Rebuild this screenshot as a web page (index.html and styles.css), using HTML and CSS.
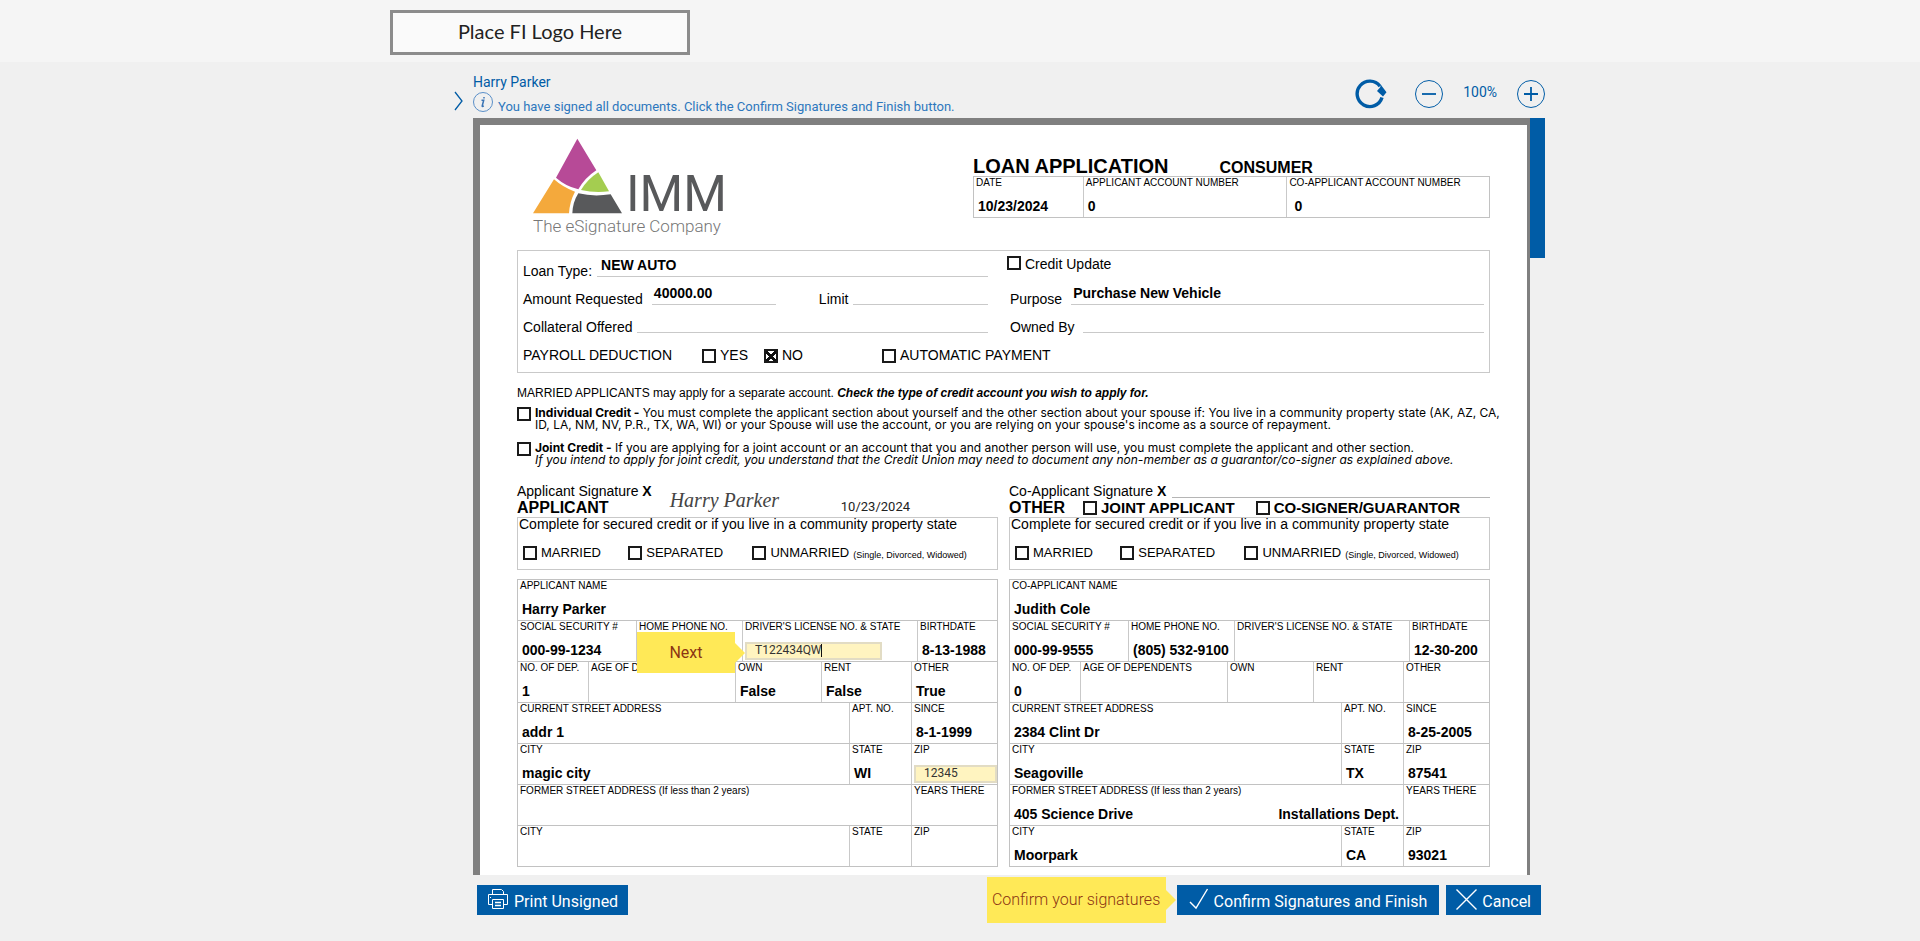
FILE: index.html
```html
<!DOCTYPE html>
<html lang="en">
<head>
<meta charset="utf-8">
<title>Loan Application</title>
<link rel="stylesheet" href="styles.css">
</head>
<body>
<header class="site-header">
  <div class="container"><div class="fi-logo">Place FI Logo Here</div></div>
</header>

<main class="container">
  <div class="workspace">
    <div class="toolbar">
      <button class="icon-btn chevron" type="button" aria-label="Expand panel">
        <svg width="9" height="20" viewBox="0 0 9 20"><path d="M1 1l7 9-7 9" fill="none" stroke="#005ca6" stroke-width="1.3"/></svg>
      </button>
      <div class="status">
        <div class="signer">Harry Parker</div>
        <div class="notice">
          <svg width="20" height="20" viewBox="0 0 20 20"><circle cx="10" cy="10" r="9.500" fill="none" stroke="#5a8fc8"/><path d="M8.500 8.200h2.200l-1.500 5.800q-.2.900 1.600-.2M11 5v1.500" fill="none" stroke="#3a74b5" stroke-width="1.500"/></svg>
          <span>You have signed all documents. Click the Confirm Signatures and Finish button.</span>
        </div>
      </div>
      <div class="zoom">
        <button class="icon-btn" type="button" aria-label="Refresh">
          <svg width="32" height="30" viewBox="0 0 32 30"><path d="M25 7.200A12.700 12.700 0 1 0 27 18.500" fill="none" stroke="#005ca6" stroke-width="3.400"/><path d="M22 12l3-3.500 1-2.500 5.500 7.300-3.500 4.200z" fill="#005ca6"/></svg>
        </button>
        <button class="icon-btn minus" type="button" aria-label="Zoom out">
          <svg width="28" height="28" viewBox="0 0 28 28"><circle cx="14" cy="14" r="13.500" fill="none" stroke="#005ca6"/><path d="M7 14h14" stroke="#005ca6" stroke-width="1.800"/></svg>
        </button>
        <span class="percent">100%</span>
        <button class="icon-btn" type="button" aria-label="Zoom in">
          <svg width="28" height="28" viewBox="0 0 28 28"><circle cx="14" cy="14" r="13.500" fill="none" stroke="#005ca6"/><path d="M7 14h14M14 7v14" stroke="#005ca6" stroke-width="1.800"/></svg>
        </button>
      </div>
    </div>

    <div class="viewer">
      <article class="sheet">
        <div class="sheet-head">
          <div class="brand">
            <svg width="89" height="77" viewBox="39 21 267 231" aria-hidden="true">
              <path d="M172 26L229 121Q196 142 175 178Q136 168 108 143Z" fill="#b74a97"/>
              <path d="M102 148Q130 173 165 185Q149 215 147 250H39Z" fill="#f4a93c"/>
              <path d="M235 127L267 184Q225 190 183 180Q202 148 235 127Z" fill="#a4cd50"/>
              <path d="M175 190Q220 201 272 193L306 250H157Q158 217 175 190Z" fill="#58595b"/>
            </svg>
            <span class="brand-name">IMM</span>
            <span class="brand-tag">The eSignature Company</span>
          </div>
          <div>
            <div class="titles"><h1>LOAN APPLICATION</h1><h2>CONSUMER</h2></div>
            <div class="form-table">
              <div class="row r-head">
                <div class="cell"><span class="cap">DATE</span><span class="val">10/23/2024</span></div>
                <div class="cell"><span class="cap">APPLICANT ACCOUNT NUMBER</span><span class="val">0</span></div>
                <div class="cell"><span class="cap">CO-APPLICANT ACCOUNT NUMBER</span><span class="val inset">0</span></div>
              </div>
            </div>
          </div>
        </div>

        <section class="request">
          <div class="pair">
            <div class="line"><span>Loan Type:</span><b class="fill">NEW AUTO</b></div>
            <label class="credit"><input type="checkbox">Credit Update</label>
          </div>
          <div class="pair">
            <div class="line"><span>Amount Requested</span><b class="fill amount">40000.00</b><span class="limit">Limit</span><b class="fill"></b></div>
            <div class="line"><span>Purpose</span><b class="fill purpose">Purchase New Vehicle</b></div>
          </div>
          <div class="pair">
            <div class="line"><span>Collateral Offered</span><b class="fill"></b></div>
            <div class="line"><span>Owned By</span><b class="fill owner"></b></div>
          </div>
          <div class="payroll">
            <span>PAYROLL DEDUCTION</span>
            <label><input type="checkbox">YES</label>
            <label><input type="checkbox" checked>NO</label>
            <label><input type="checkbox">AUTOMATIC PAYMENT</label>
          </div>
        </section>

        <section class="terms">
          <p>MARRIED APPLICANTS may apply for a separate account. <b><i>Check the type of credit account you wish to apply for.</i></b></p>
          <label><input type="checkbox"><span><b>Individual Credit -</b> You must complete the applicant section about yourself and the other section about your spouse if: You live in a community property state (AK, AZ, CA,<br>ID, LA, NM, NV, P.R., TX, WA, WI) or your Spouse will use the account, or you are relying on your spouse's income as a source of repayment.</span></label>
          <label><input type="checkbox"><span><b>Joint Credit -</b> If you are applying for a joint account or an account that you and another person will use, you must complete the applicant and other section.<br><i>If you intend to apply for joint credit, you understand that the Credit Union may need to document any non-member as a guarantor/co-signer as explained above.</i></span></label>
        </section>

        <div class="parties">
          <section>
            <div class="signing">
              <div>
                <div class="sign-line"><span>Applicant Signature <b>X</b></span></div>
                <div class="role"><h3>APPLICANT</h3></div>
              </div>
              <span class="signature">Harry Parker</span>
              <span class="sign-date">10/23/2024</span>
            </div>
            <div class="marital">
              <p>Complete for secured credit or if you live in a community property state</p>
              <div class="choices">
                <label><input type="checkbox">MARRIED</label>
                <label><input type="checkbox">SEPARATED</label>
                <label><input type="checkbox">UNMARRIED <small>(Single, Divorced, Widowed)</small></label>
              </div>
            </div>
            <div class="form-table">
              <div class="row"><div class="cell"><span class="cap">APPLICANT NAME</span><span class="val">Harry Parker</span></div></div>
              <div class="row r-id">
                <div class="cell"><span class="cap">SOCIAL SECURITY #</span><span class="val">000-99-1234</span></div>
                <div class="cell"><span class="cap">HOME PHONE NO.</span><button class="flag next" type="button">Next</button></div>
                <div class="cell"><label class="cap" for="license">DRIVER'S LICENSE NO. &amp; STATE</label><span class="entry caret"><input id="license" type="text" value="T122434QW"></span></div>
                <div class="cell"><span class="cap">BIRTHDATE</span><span class="val">8-13-1988</span></div>
              </div>
              <div class="row r-home">
                <div class="cell"><span class="cap">NO. OF DEP.</span><span class="val">1</span></div>
                <div class="cell"><span class="cap">AGE OF DEPENDENTS</span></div>
                <div class="cell"><span class="cap">OWN</span><span class="val">False</span></div>
                <div class="cell"><span class="cap">RENT</span><span class="val">False</span></div>
                <div class="cell"><span class="cap">OTHER</span><span class="val">True</span></div>
              </div>
              <div class="row r-street">
                <div class="cell"><span class="cap">CURRENT STREET ADDRESS</span><span class="val">addr 1</span></div>
                <div class="cell"><span class="cap">APT. NO.</span></div>
                <div class="cell"><span class="cap">SINCE</span><span class="val">8-1-1999</span></div>
              </div>
              <div class="row r-street">
                <div class="cell"><span class="cap">CITY</span><span class="val">magic city</span></div>
                <div class="cell"><span class="cap">STATE</span><span class="val">WI</span></div>
                <div class="cell"><label class="cap" for="zip">ZIP</label><span class="entry wide"><input id="zip" type="text" value="12345"></span></div>
              </div>
              <div class="row r-former">
                <div class="cell"><span class="cap">FORMER STREET ADDRESS (If less than 2 years)</span></div>
                <div class="cell"><span class="cap">YEARS THERE</span></div>
              </div>
              <div class="row r-street">
                <div class="cell"><span class="cap">CITY</span></div>
                <div class="cell"><span class="cap">STATE</span></div>
                <div class="cell"><span class="cap">ZIP</span></div>
              </div>
            </div>
          </section>

          <section>
            <div class="signing">
              <div class="grow">
                <div class="sign-line"><span>Co-Applicant Signature <b>X</b></span><i class="rule"></i></div>
                <div class="role">
                  <h3>OTHER</h3>
                  <label><input type="checkbox">JOINT APPLICANT</label>
                  <label><input type="checkbox">CO-SIGNER/GUARANTOR</label>
                </div>
              </div>
            </div>
            <div class="marital">
              <p>Complete for secured credit or if you live in a community property state</p>
              <div class="choices">
                <label><input type="checkbox">MARRIED</label>
                <label><input type="checkbox">SEPARATED</label>
                <label><input type="checkbox">UNMARRIED <small>(Single, Divorced, Widowed)</small></label>
              </div>
            </div>
            <div class="form-table">
              <div class="row"><div class="cell"><span class="cap">CO-APPLICANT NAME</span><span class="val">Judith Cole</span></div></div>
              <div class="row r-id">
                <div class="cell"><span class="cap">SOCIAL SECURITY #</span><span class="val">000-99-9555</span></div>
                <div class="cell"><span class="cap">HOME PHONE NO.</span><span class="val">(805) 532-9100</span></div>
                <div class="cell"><span class="cap">DRIVER'S LICENSE NO. &amp; STATE</span></div>
                <div class="cell"><span class="cap">BIRTHDATE</span><span class="val">12-30-200</span></div>
              </div>
              <div class="row r-home">
                <div class="cell"><span class="cap">NO. OF DEP.</span><span class="val">0</span></div>
                <div class="cell"><span class="cap">AGE OF DEPENDENTS</span></div>
                <div class="cell"><span class="cap">OWN</span></div>
                <div class="cell"><span class="cap">RENT</span></div>
                <div class="cell"><span class="cap">OTHER</span></div>
              </div>
              <div class="row r-street">
                <div class="cell"><span class="cap">CURRENT STREET ADDRESS</span><span class="val">2384 Clint Dr</span></div>
                <div class="cell"><span class="cap">APT. NO.</span></div>
                <div class="cell"><span class="cap">SINCE</span><span class="val">8-25-2005</span></div>
              </div>
              <div class="row r-street">
                <div class="cell"><span class="cap">CITY</span><span class="val">Seagoville</span></div>
                <div class="cell"><span class="cap">STATE</span><span class="val">TX</span></div>
                <div class="cell"><span class="cap">ZIP</span><span class="val">87541</span></div>
              </div>
              <div class="row r-former">
                <div class="cell"><span class="cap">FORMER STREET ADDRESS (If less than 2 years)</span><span class="val split"><span>405 Science Drive</span><span>Installations Dept.</span></span></div>
                <div class="cell"><span class="cap">YEARS THERE</span></div>
              </div>
              <div class="row r-street">
                <div class="cell"><span class="cap">CITY</span><span class="val">Moorpark</span></div>
                <div class="cell"><span class="cap">STATE</span><span class="val">CA</span></div>
                <div class="cell"><span class="cap">ZIP</span><span class="val">93021</span></div>
              </div>
            </div>
          </section>
        </div>
      </article>
      <div class="scroll-track"><div class="scroll-thumb"></div></div>
    </div>

    <footer class="actions">
      <button class="action" type="button">
        <svg width="22" height="22" viewBox="0 0 22 22" fill="none" stroke="#fff"><path d="M5.500 6.500v-5h9l2 2v3M5.500 16.500h-4v-10h19v10h-4M3 9.500h1"/><path d="M5.500 11.500h11v9h-11z"/><path d="M8 14.500h6M8 17.500h6" stroke-width="1.500"/></svg>
        Print Unsigned
      </button>
      <span class="flag confirm-flag">Confirm your signatures</span>
      <button class="action confirm" type="button">
        <svg width="20" height="22" viewBox="0 0 20 22" fill="none" stroke="#fff" stroke-width="1.400"><path d="M1 14l6 6L18.500 1"/></svg>
        Confirm Signatures and Finish
      </button>
      <button class="action cancel" type="button">
        <svg width="21" height="21" viewBox="0 0 21 21" fill="none" stroke="#fff" stroke-width="1.400"><path d="M.5.500l20 20M20.500.500l-20 20"/></svg>
        Cancel
      </button>
    </footer>
  </div>
</main>
</body>
</html>
```

FILE: styles.css
```css
* { box-sizing: border-box; }
body { margin: 0; background: #f0f0f0; font-family: Roboto, sans-serif; }
h1, h2, h3, p { margin: 0; }
button, input { font: inherit; margin: 0; }

.container { max-width: 1140px; margin: 0 auto; }

.site-header { background: #f5f5f5; padding: 10px 0 7px; }
.fi-logo {
  width: 300px;
  border: 3px solid #8c8c8c;
  background: #fafafa;
  color: #222;
  font: 20px/37px Lato, sans-serif;
  padding-bottom: 2px;
  text-align: center;
}

.workspace { margin: 0 -15px 0 64px; }

/* Toolbar */
.toolbar { display: flex; align-items: flex-start; height: 56px; padding-top: 12px; color: #005ca6; }
.icon-btn { border: 0; padding: 0; background: none; cursor: pointer; }
.icon-btn svg, .notice svg, .action svg { display: block; }
.chevron { margin: 17px 10px 0 0; }
.signer { font-size: 14px; line-height: 16px; margin-bottom: 2px; }
.notice { display: flex; gap: 5px; font-size: 13px; line-height: 30px; height: 26px; color: #2d77bd; }
.zoom { display: flex; align-items: center; margin: 5px 0 0 auto; }
.zoom .minus { margin-left: 28px; }
.percent { font-size: 14px; line-height: 16px; margin: 0 20px; padding-bottom: 4px; }

/* Document viewer */
.viewer { display: flex; margin-left: 19px; }
.sheet {
  flex: 1;
  min-width: 0;
  padding: 0 37px 8px;
  border: solid #808080;
  border-width: 7px 3px 0 7px;
  background: #fff;
  color: #000;
  font-family: "Liberation Sans", Arial, sans-serif;
  font-size: 14px;
  line-height: 16px;
}
.scroll-track { width: 15px; }
.scroll-thumb { height: 140px; background: #005ca6; }

input[type="checkbox"] {
  appearance: none;
  flex: none;
  width: 14px;
  height: 14px;
  border: 2px solid #1a1a1a;
  background: #fff;
}
input[type="checkbox"]:checked {
  background:
    linear-gradient(45deg, transparent 40%, #111 40% 60%, transparent 60%),
    linear-gradient(-45deg, transparent 40%, #111 40% 60%, transparent 60%),
    #fff;
}
.sheet label { display: flex; gap: 4px; }

.sheet-head { display: grid; grid-template-columns: 456fr 517fr; height: 125px; }
.brand {
  display: grid;
  grid-template-columns: 89px auto;
  grid-template-rows: 77px 24px;
  column-gap: 4px;
  justify-content: start;
  align-items: end;
  padding: 12px 0 0 16px;
}
.brand-name { font: 50px/50px Roboto, sans-serif; height: 44px; color: #58595b; margin-bottom: 1px; }
.brand-tag { grid-column: 1 / -1; font: 300 17px/24px Roboto, sans-serif; color: #777; white-space: nowrap; }
.titles { display: flex; align-items: baseline; gap: 51px; height: 51px; padding-top: 30px; }
h1 { font-size: 20px; line-height: 23px; }
h2 { font-size: 16px; line-height: 20px; }
h3 { font-size: 16px; line-height: 18px; }

/* Bordered grids of captioned cells */
.form-table { border: solid #c2c2c2; border-width: 0 1px 1px; }
.row { display: grid; border-top: 1px solid #c2c2c2; height: 41px; }
.r-head { grid-template-columns: 109fr 204fr 203fr; }
.r-id { grid-template-columns: 118fr 106fr 175fr 80fr; }
.r-home { grid-template-columns: 70fr 147fr 86fr 90fr 86fr; }
.r-street { grid-template-columns: 331fr 62fr 86fr; }
.r-former { grid-template-columns: 393fr 86fr; }
.cell {
  position: relative;
  display: flex;
  flex-direction: column;
  gap: 10px;
  min-width: 0;
  padding-left: 2px;
  white-space: nowrap;
}
.cell + .cell { border-left: 1px solid #c9c9c9; }
.cap { font-size: 10px; line-height: 11px; }
.val { font-weight: bold; padding-left: 2px; }
.inset { padding-left: 5px; }
.split { display: flex; justify-content: space-between; padding-right: 4px; }

.entry { position: relative; width: 137px; }
.entry.wide { width: 100%; }
.entry input {
  display: block;
  width: 100%;
  height: 18px;
  border: 2px solid #e2dcc4;
  padding: 0 0 3px 8px;
  background: #fff4c0;
  color: #333;
  font: 12px/13px Roboto, sans-serif;
}
.caret::after {
  content: "";
  position: absolute;
  left: 76px;
  top: 2px;
  width: 1px;
  height: 13px;
  background: #111;
}

/* Yellow pointers */
.flag { background: #ffe957; color: #8c3514; border: 0; padding: 0; text-align: center; }
.flag::after {
  content: "";
  position: absolute;
  left: 100%;
  top: 50%;
  margin-top: -10px;
  border: 10px solid transparent;
  border-right-width: 0;
  border-left-color: #ffe957;
}
.next { position: absolute; z-index: 1; left: 0; top: 11px; width: 98px; height: 41px; font: 16px/41px Roboto, sans-serif; }
.confirm-flag { position: relative; margin-left: auto; width: 179px; font-weight: 300; font-size: 16px; line-height: 46px; white-space: nowrap; }

/* Loan request */
.request { border: 1px solid #c9c9c9; padding: 0 5px 9px; }
.pair { display: grid; grid-template-columns: 465fr 474fr; gap: 22px; height: 28px; }
.line { display: flex; align-items: flex-end; gap: 5px; min-width: 0; }
.fill { flex: 1; margin-bottom: 2px; padding: 0 0 3px 4px; border-bottom: 1px solid #c9c9c9; }
.amount { flex: 0 0 124px; padding-left: 2px; margin-left: 4px; }
.limit { margin-left: 38px; }
.purpose { margin-left: 4px; padding-left: 2px; }
.owner { margin-left: 3px; }
.request .credit { padding-top: 5px; margin-left: -3px; }
.payroll { display: flex; align-items: flex-end; height: 28px; }
.payroll label { align-items: flex-end; }
.payroll span { width: 179px; }
.payroll label:nth-of-type(1) { width: 62px; }
.payroll label:nth-of-type(2) { width: 118px; }

/* Terms */
.terms { font-size: 12px; line-height: 12px; white-space: nowrap; padding-top: 13px; }
.terms p { line-height: 14px; margin-bottom: 7px; }
.terms label { align-items: flex-start; margin-bottom: 11px; font-family: Inter, "Liberation Sans", sans-serif; }

/* Applicants */
.parties { display: grid; grid-template-columns: 1fr 1fr; gap: 11px; padding-top: 6px; }
.parties section { min-width: 0; white-space: nowrap; }
.signing { display: flex; align-items: flex-start; height: 34px; }
.grow { flex: 1; }
.sign-line, .role { display: flex; }
.rule { flex: 1; height: 15px; margin-left: 6px; border-bottom: 1px solid #b5b5b5; }
.role label { align-items: center; margin-left: 18px; font-weight: bold; font-size: 15px; }
.role label + label { margin-left: 21px; }
.signature { margin-left: 18px; font: italic 20px/34px "Liberation Serif", serif; color: #444; }
.sign-date { margin-left: auto; padding: 16px 88px 0 0; font: 13px/16px Roboto, sans-serif; color: #222; }
.marital { border: 1px solid #c9c9c9; height: 53px; margin-bottom: 9px; }
.marital p { line-height: 12px; padding-left: 1px; }
.choices { display: grid; grid-template-columns: 105fr 124fr 244fr; padding: 15px 0 0 5px; font-size: 13px; }
.choices label { align-items: center; }
.choices small { font-size: 9px; line-height: 10px; padding-top: 3px; }

/* Footer actions */
.actions { display: flex; align-items: center; padding: 2px 4px 17px; margin-left: 19px; }
.action {
  display: flex;
  align-items: center;
  gap: 5px;
  height: 30px;
  padding: 4px 10px 0;
  border: 0;
  background: #005ca6;
  color: #fff;
  font-size: 16px;
  line-height: 20px;
  white-space: nowrap;
}
.action svg { margin-bottom: 6px; }
.confirm { margin-left: 11px; padding: 4px 12px 0; }
.cancel { margin-left: 7px; }
```
